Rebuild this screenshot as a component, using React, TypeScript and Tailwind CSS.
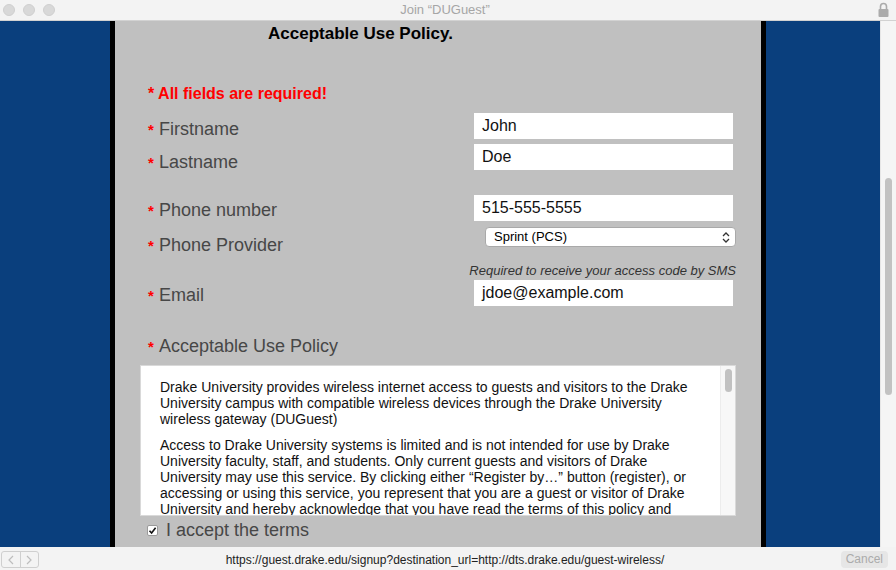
import React from 'react';

const font = "font-['Liberation_Sans',Arial,Helvetica,sans-serif]";

const Label: React.FC<{ text: string; top: string }> = ({ text, top }) => (
  <div className={`w-[334px] pl-[8px] flex items-baseline ${top}`}>
    <span className="text-[15px] font-bold text-[#ff0000] w-[11px] leading-[22px]">*</span>
    <span className="text-[18px] leading-[22px] text-[#474747]">{text}</span>
  </div>
);

const Field: React.FC<{ value: string }> = ({ value }) => (
  <div className="w-[259px] h-[26px] bg-white flex items-center pl-[8px] text-[16px] text-[#111]">{value}</div>
);

const App: React.FC = () => {
  return (
    <div className={`w-[896px] h-[570px] flex flex-col overflow-hidden bg-[#f3f3f3] ${font}`}>
      {/* window title bar */}
      <div className="h-[21px] shrink-0 relative flex items-center justify-center border-b border-[#d2d2d2] bg-[#f3f3f3]">
        <div className="absolute left-[3px] top-[4px] flex gap-[8px]">
          <div className="w-[12px] h-[12px] rounded-full bg-[#d8d8d8] border border-[#cfcfcf]"></div>
          <div className="w-[12px] h-[12px] rounded-full bg-[#d8d8d8] border border-[#cfcfcf]"></div>
          <div className="w-[12px] h-[12px] rounded-full bg-[#d8d8d8] border border-[#cfcfcf]"></div>
        </div>
        <span className="text-[13px] text-[#a6a6a6] -translate-x-[3px]">Join “DUGuest”</span>
        <svg className="absolute left-[878px] top-[2px]" width="11" height="15" viewBox="0 0 11 15">
          <path d="M2.5 7 V4.5 A3 3 0 0 1 8.5 4.5 V7" fill="none" stroke="#ababab" strokeWidth="1.6" />
          <rect x="0.5" y="7" width="10" height="8" rx="1" fill="#ababab" />
        </svg>
      </div>

      {/* page */}
      <div className="flex h-[526px] shrink-0">
        <div className="w-[110px] bg-[#0a3f7d]"></div>
        <div className="w-[5px] bg-black"></div>
        <div className="w-[646px] bg-[#c0c0c0] pl-[25px] flex flex-col">
          <div className="mt-[3px] h-[20px] leading-[20px] pl-[128px] text-[17px] font-bold text-black">Acceptable Use Policy.</div>
          <div className="mt-[40px] h-[20px] leading-[20px] pl-[8px] text-[16px] font-bold text-[#ff0000]">* All fields are required!</div>

          <div className="mt-[9px] flex items-start h-[26px]">
            <Label text="Firstname" top="mt-[5px]" />
            <Field value="John" />
          </div>
          <div className="mt-[5px] flex items-start h-[30px]">
            <Label text="Lastname" top="mt-[7px]" />
            <Field value="Doe" />
          </div>
          <div className="mt-[21px] flex items-start">
            <Label text="Phone number" top="mt-[4px]" />
            <Field value="515-555-5555" />
          </div>
          <div className="mt-[5px] flex items-start h-[30px]">
            <Label text="Phone Provider" top="mt-[7px]" />
            <div className="ml-[11px] w-[251px] h-[20px] bg-white border border-[#a9a9a9] rounded-[4px] flex items-center justify-between pl-[8px] pr-[5px] text-[13px] text-black">
              <span>Sprint (PCS)</span>
              <svg width="8" height="11" viewBox="0 0 8 11">
                <path d="M1 4 L4 1 L7 4 M1 7 L4 10 L7 7" fill="none" stroke="#333" strokeWidth="1.3" />
              </svg>
            </div>
          </div>
          <div className="mt-[6px] w-[596px] h-[16px] leading-[16px] text-right text-[13px] italic text-[#333]">
            Required to receive your access code by SMS
          </div>
          <div className="mt-[1px] flex items-start">
            <Label text="Email" top="mt-[4px]" />
            <Field value="jdoe@example.com" />
          </div>
          <div className="mt-[28px]">
            <Label text="Acceptable Use Policy" top="" />
          </div>

          <div className="mt-[7px] w-[596px] h-[151px] bg-white border border-[#d9d9d9] flex overflow-hidden">
            <div className="flex-1 pl-[19px] pt-[13px] text-[14px] leading-[16px] text-[#111]">
              <div className="w-[550px]">
                <p>Drake University provides wireless internet access to guests and visitors to the Drake University campus with compatible wireless devices through the Drake University wireless gateway (DUGuest)</p>
                <p className="mt-[10px]">Access to Drake University systems is limited and is not intended for use by Drake University faculty, staff, and students. Only current guests and visitors of Drake University may use this service. By clicking either “Register by…” button (register), or accessing or using this service, you represent that you are a guest or visitor of Drake University and hereby acknowledge that you have read the terms of this policy and agree to abide by them.</p>
              </div>
            </div>
            <div className="w-[15px] shrink-0 bg-[#f7f7f7] border-l border-[#ececec] pt-[3px] flex justify-center">
              <div className="w-[7px] h-[23px] rounded-full bg-[#c1c1c1]"></div>
            </div>
          </div>

          <div className="mt-[3px] pl-[7px] flex items-center gap-[8px] h-[22px]">
            <div className="w-[11px] h-[11px] bg-white border border-[#9a9a9a] rounded-[2px] flex items-center justify-center">
              <svg width="9" height="9" viewBox="0 0 9 9">
                <path d="M1.5 4.8 L3.6 7 L7.6 1.8" fill="none" stroke="#111" strokeWidth="1.6" />
              </svg>
            </div>
            <span className="text-[18px] leading-[22px] text-[#474747]">I accept the terms</span>
          </div>
        </div>
        <div className="w-[5px] bg-black"></div>
        <div className="w-[114px] bg-[#0a3f7d]"></div>
        <div className="w-[16px] bg-[#f5f5f5] border-l border-[#e6e6e6] pl-[4px] pt-[157px]">
          <div className="w-[7px] h-[217px] rounded-full bg-[#c2c2c2]"></div>
        </div>
      </div>

      {/* status bar */}
      <div className="h-[23px] shrink-0 relative flex items-center justify-center bg-[#f3f3f3]">
        <div className="absolute left-[1px] top-[4px] w-[38px] h-[17px] flex border border-[#cfcfcf] rounded-[3px]">
          <div className="flex-1 flex items-center justify-center border-r border-[#cfcfcf]">
            <svg width="6" height="10" viewBox="0 0 6 10"><path d="M5 1 L1 5 L5 9" fill="none" stroke="#bdbdbd" strokeWidth="1.2" /></svg>
          </div>
          <div className="flex-1 flex items-center justify-center">
            <svg width="6" height="10" viewBox="0 0 6 10"><path d="M1 1 L5 5 L1 9" fill="none" stroke="#bdbdbd" strokeWidth="1.2" /></svg>
          </div>
        </div>
        <span className="text-[12px] text-[#222] -translate-x-[3px] translate-y-[1px]">https://guest.drake.edu/signup?destination_url=http://dts.drake.edu/guest-wireless/</span>
        <div className="absolute right-[8px] top-[4px] h-[17px] px-[5px] rounded-[4px] bg-[#e6e6e6] text-[12px] leading-[17px] text-[#ababab]">Cancel</div>
      </div>
    </div>
  );
};

export default App;
